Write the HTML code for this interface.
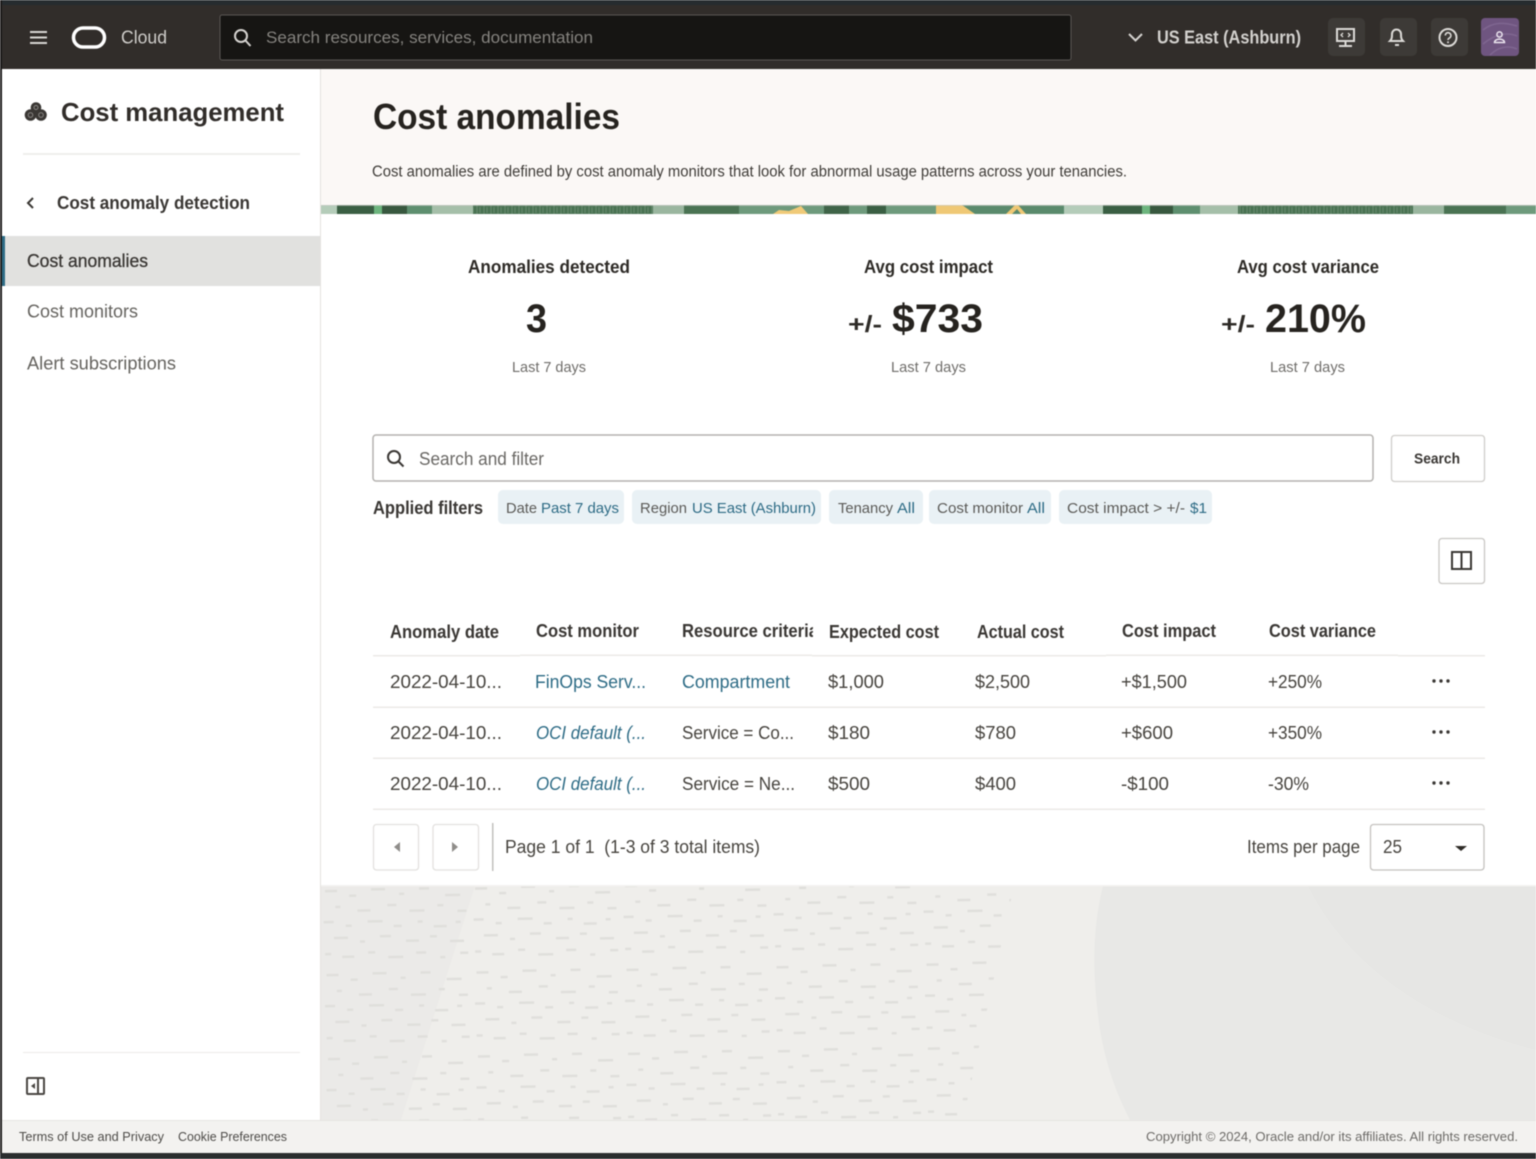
<!DOCTYPE html>
<html><head><meta charset="utf-8"><title>Cost anomalies</title>
<style>
html,body{margin:0;padding:0;background:#fff;width:1536px;height:1159px;overflow:hidden}
svg{display:block;filter:blur(.6px)}
text{font-family:"Liberation Sans",sans-serif;white-space:pre}
.b{font-weight:bold}
.d{fill:#312d2a}
.g{fill:#5f5d5a}
.l{fill:#2d6b85}
.t{font-size:18px;fill:#47443f}
.h{font-size:18px;font-weight:bold;fill:#3a3734}
.c{font-size:15px;fill:#5b5a57}
.cl{font-size:15px;fill:#2d6b85}
</style></head>
<body>
<svg width="1536" height="1159" viewBox="0 0 1536 1159" xmlns="http://www.w3.org/2000/svg">
<defs>
<pattern id="dash" width="150" height="84" patternUnits="userSpaceOnUse" patternTransform="translate(321 886) rotate(-1)">
<g fill="#e0dfdc">
<rect x="4" y="4" width="12" height="2.500"/><rect x="28" y="9" width="7" height="2.500"/><rect x="50" y="3" width="14" height="2.500"/><rect x="78" y="8" width="5" height="2.500"/><rect x="98" y="3" width="10" height="2.500"/><rect x="124" y="10" width="15" height="2.500"/>
<rect x="14" y="20" width="5" height="2.500"/><rect x="36" y="24" width="13" height="2.500"/><rect x="66" y="19" width="9" height="2.500"/><rect x="88" y="25" width="15" height="2.500"/><rect x="116" y="20" width="6" height="2.500"/><rect x="136" y="26" width="9" height="2.500"/>
<rect x="2" y="35" width="10" height="2.500"/><rect x="24" y="39" width="6" height="2.500"/><rect x="46" y="35" width="15" height="2.500"/><rect x="72" y="40" width="8" height="2.500"/><rect x="96" y="36" width="5" height="2.500"/><rect x="112" y="41" width="13" height="2.500"/><rect x="134" y="37" width="5" height="2.500"/>
<rect x="12" y="51" width="14" height="2.500"/><rect x="38" y="55" width="5" height="2.500"/><rect x="58" y="50" width="11" height="2.500"/><rect x="84" y="55" width="13" height="2.500"/><rect x="108" y="51" width="7" height="2.500"/><rect x="128" y="56" width="14" height="2.500"/>
<rect x="3" y="67" width="6" height="2.500"/><rect x="20" y="70" width="12" height="2.500"/><rect x="46" y="66" width="7" height="2.500"/><rect x="66" y="71" width="15" height="2.500"/><rect x="94" y="67" width="10" height="2.500"/><rect x="118" y="72" width="5" height="2.500"/><rect x="138" y="68" width="8" height="2.500"/>
</g>
</pattern>
<pattern id="grain" width="7" height="9" patternUnits="userSpaceOnUse">
<path d="M1 0v9M4 0v6" stroke="#ffffff" stroke-opacity=".16" stroke-width="1"/>
</pattern>
</defs>

<!-- frame -->
<rect width="1536" height="1159" fill="#fff"/>
<rect width="1536" height="5" fill="#262c2f"/>
<rect y="5" width="1536" height="64" fill="#312d2a"/>
<rect x="0" y="0" width="2" height="1159" fill="#1c1b1a"/>

<!-- header -->
<g stroke="#d8d6d3" stroke-width="2"><path d="M30 32h17M30 37.500h17M30 43h17"/></g>
<rect x="73.500" y="28" width="31" height="19" rx="9.500" fill="none" stroke="#fff" stroke-width="3.500"/>
<text x="121" y="43.500" font-size="18" fill="#cfcdca" textLength="46" lengthAdjust="spacingAndGlyphs">Cloud</text>
<rect x="220" y="15" width="851" height="45" rx="2" fill="#161513" stroke="#5a5754"/>
<circle cx="241" cy="36" r="6" fill="none" stroke="#d5d3d0" stroke-width="2"/><path d="M245.500 40.500l5 5.500" stroke="#d5d3d0" stroke-width="2"/>
<text x="266" y="43" font-size="17" fill="#85837f" textLength="327" lengthAdjust="spacingAndGlyphs">Search resources, services, documentation</text>
<path d="M1129 34l6.500 6.500 6.500-6.500" fill="none" stroke="#d5d3d0" stroke-width="2"/>
<text x="1157" y="43.500" font-size="18" fill="#d3d1ce" class="b" textLength="144" lengthAdjust="spacingAndGlyphs">US East (Ashburn)</text>
<rect x="1328" y="18" width="37" height="38" rx="5" fill="#3d3a37"/>
<rect x="1380" y="18" width="37" height="38" rx="5" fill="#3d3a37"/>
<rect x="1431" y="18" width="37" height="38" rx="5" fill="#3d3a37"/>
<g fill="none" stroke="#dcdad7" stroke-width="2">
<rect x="1337" y="29" width="17" height="12"/><path d="M1345.500 41v4M1339 46h13"/>
<path d="M1343 33l-2 2 2 2M1348 33l2 2-2 2" stroke-width="1.300"/>
<path d="M1390 41c2-2 2-4 2-7a4.500 4.500 0 0 1 9 0c0 3 0 5 2 7z"/><path d="M1395 45h4"/>
<circle cx="1448" cy="37.500" r="8.500"/>
<path d="M1445.300 35.500a2.800 2.800 0 1 1 4.200 2.400c-1 .6-1.500 1-1.500 2.100" stroke-width="1.600"/>
</g>
<circle cx="1448" cy="42.300" r="1" fill="#dcdad7"/>
<rect x="1481" y="18" width="38" height="38" rx="4" fill="#6f5580"/>
<g stroke="#7f6690" stroke-width="1.500" fill="none"><path d="M1483 30c10-8 20-8 34-4M1483 44c12-10 24-12 34-8M1490 55c8-8 18-10 27-6"/></g>
<circle cx="1499.500" cy="34.500" r="2.600" fill="none" stroke="#ece6ef" stroke-width="1.500"/><path d="M1494.500 42.500c0-4.500 10-4.500 10 0z" fill="none" stroke="#ece6ef" stroke-width="1.500"/>

<!-- sidebar -->
<rect x="320" y="69" width="1" height="1051" fill="#e4e2df"/>
<g fill="#3a3734"><circle cx="36" cy="107.500" r="5.300"/><circle cx="30.500" cy="115" r="5.800"/><circle cx="41" cy="115" r="5.800"/></g>
<g fill="none" stroke="#8f8d8a" stroke-width=".9"><circle cx="36" cy="107.500" r="2"/><circle cx="30.500" cy="115" r="2.300"/><circle cx="41" cy="115" r="2.300"/></g>
<text x="61" y="121" font-size="26" class="b d" textLength="223" lengthAdjust="spacingAndGlyphs">Cost management</text>
<rect x="23" y="153" width="277" height="2" fill="#efeeec"/>
<path d="M33 198l-5 5 5 5" fill="none" stroke="#3a3734" stroke-width="2"/>
<text x="57" y="209" font-size="18" class="b" fill="#3a3734" textLength="193" lengthAdjust="spacingAndGlyphs">Cost anomaly detection</text>
<rect x="2" y="236" width="318" height="50" fill="#e1e1df"/>
<rect x="2" y="236" width="3" height="50" fill="#2d6b85"/>
<text x="27" y="267" font-size="18" fill="#3a3734" stroke="#3a3734" stroke-width=".3" textLength="121" lengthAdjust="spacingAndGlyphs">Cost anomalies</text>
<text x="27" y="317.500" font-size="18" fill="#65635f" textLength="111" lengthAdjust="spacingAndGlyphs">Cost monitors</text>
<text x="27" y="369.500" font-size="18" fill="#65635f" textLength="149" lengthAdjust="spacingAndGlyphs">Alert subscriptions</text>
<rect x="23" y="1052" width="277" height="1" fill="#ecebe9"/>
<rect x="27" y="1078" width="17" height="16" rx="1" fill="none" stroke="#4a4743" stroke-width="2"/>
<path d="M38 1078v16" stroke="#4a4743" stroke-width="2"/><path d="M35 1083l-4 3 4 3z" fill="#4a4743"/>

<!-- hero -->
<rect x="321" y="69" width="1215" height="136" fill="#fbf8f6"/>
<text x="373" y="129" font-size="36" class="b" fill="#26231f" textLength="247" lengthAdjust="spacingAndGlyphs">Cost anomalies</text>
<text x="372" y="176.500" font-size="15.500" fill="#3f3c38" textLength="755" lengthAdjust="spacingAndGlyphs">Cost anomalies are defined by cost anomaly monitors that look for abnormal usage patterns across your tenancies.</text>

<!-- strip -->
<rect x="321" y="205" width="1215" height="9" fill="#5a8a6c"/>
<g>
<rect x="321" y="205" width="16" height="9" fill="#b4ccb9"/>
<rect x="337" y="205" width="37" height="9" fill="#3a5f43"/>
<rect x="374" y="205" width="8" height="9" fill="#6db57e"/>
<rect x="382" y="205" width="25" height="9" fill="#38583f"/>
<rect x="407" y="205" width="25" height="9" fill="#5e8f6f"/>
<rect x="432" y="205" width="41" height="9" fill="#a5bfa9"/>
<rect x="473" y="205" width="180" height="9" fill="#4a7353"/>
<rect x="653" y="205" width="31" height="9" fill="#9ab69f"/>
<rect x="684" y="205" width="55" height="9" fill="#4a7353"/>
<rect x="739" y="205" width="34" height="9" fill="#6e9a7c"/>
<rect x="773" y="205" width="51" height="9" fill="#6e9a7c"/>
<path d="M773 214l6-4 10 1 12-5 7 8z" fill="#f0ca78"/>
<rect x="824" y="205" width="25" height="9" fill="#3f6448"/>
<rect x="849" y="205" width="18" height="9" fill="#6e9a7c"/>
<rect x="867" y="205" width="19" height="9" fill="#3a5f43"/>
<rect x="886" y="205" width="50" height="9" fill="#6e9a7c"/>
<path d="M936 205h26l13 9h-39z" fill="#efc875"/>
<path d="M1006 214l9-9h3l8 9h-5l-4-5-5 5z" fill="#efc875"/>
<rect x="1064" y="205" width="39" height="9" fill="#b4ccb9"/>
<rect x="1103" y="205" width="39" height="9" fill="#3a5f43"/>
<rect x="1142" y="205" width="8" height="9" fill="#6db57e"/>
<rect x="1150" y="205" width="23" height="9" fill="#38583f"/>
<rect x="1173" y="205" width="27" height="9" fill="#5e8f6f"/>
<rect x="1200" y="205" width="38" height="9" fill="#a5bfa9"/>
<rect x="1238" y="205" width="175" height="9" fill="#4a7353"/>
<rect x="1413" y="205" width="31" height="9" fill="#9ab69f"/>
<rect x="1444" y="205" width="62" height="9" fill="#4a7353"/>
<rect x="1506" y="205" width="30" height="9" fill="#6e9a7c"/>
<rect x="473" y="205" width="180" height="9" fill="url(#grain)"/>
<rect x="1238" y="205" width="175" height="9" fill="url(#grain)"/>
<rect x="321" y="205" width="1215" height="1" fill="#c9c9c6" fill-opacity=".6"/>
</g>

<!-- metrics -->
<text x="468" y="273" font-size="18" class="b" fill="#2e2b27" textLength="162" lengthAdjust="spacingAndGlyphs">Anomalies detected</text>
<text x="526" y="332" font-size="40" class="b" fill="#26231f" textLength="21" lengthAdjust="spacingAndGlyphs">3</text>
<text x="512" y="372" font-size="15" fill="#6f6d6a" textLength="74" lengthAdjust="spacingAndGlyphs">Last 7 days</text>
<text x="864" y="273" font-size="18" class="b" fill="#2e2b27" textLength="129" lengthAdjust="spacingAndGlyphs">Avg cost impact</text>
<text x="848" y="332" font-size="23" class="b" fill="#2e2b27" textLength="34" lengthAdjust="spacingAndGlyphs">+/-</text>
<text x="892" y="332" font-size="40" class="b" fill="#26231f" textLength="91" lengthAdjust="spacingAndGlyphs">$733</text>
<text x="891" y="372" font-size="15" fill="#6f6d6a" textLength="75" lengthAdjust="spacingAndGlyphs">Last 7 days</text>
<text x="1237" y="273" font-size="18" class="b" fill="#2e2b27" textLength="142" lengthAdjust="spacingAndGlyphs">Avg cost variance</text>
<text x="1221" y="332" font-size="23" class="b" fill="#2e2b27" textLength="34" lengthAdjust="spacingAndGlyphs">+/-</text>
<text x="1265" y="332" font-size="40" class="b" fill="#26231f" textLength="101" lengthAdjust="spacingAndGlyphs">210%</text>
<text x="1270" y="372" font-size="15" fill="#6f6d6a" textLength="75" lengthAdjust="spacingAndGlyphs">Last 7 days</text>

<!-- search -->
<rect x="373" y="435" width="1000" height="46" rx="3" fill="#fff" stroke="#b4b2af" stroke-width="1.500"/>
<circle cx="394" cy="457" r="6" fill="none" stroke="#3a3734" stroke-width="2"/><path d="M398.500 461.500l5 5" stroke="#3a3734" stroke-width="2"/>
<text x="419" y="465" font-size="18" fill="#6a6865" textLength="125" lengthAdjust="spacingAndGlyphs">Search and filter</text>
<rect x="1391.500" y="435.500" width="93" height="46" rx="3" fill="#fff" stroke="#cfcdca" stroke-width="1.300"/>
<text x="1414" y="463.500" font-size="15" class="b" fill="#3a3734" textLength="46" lengthAdjust="spacingAndGlyphs">Search</text>

<!-- filters -->
<text x="373" y="514" font-size="18" class="b" fill="#3a3734" textLength="110" lengthAdjust="spacingAndGlyphs">Applied filters</text>
<g fill="#e9f1f5">
<rect x="498" y="490" width="126" height="34" rx="5"/>
<rect x="632" y="490" width="189" height="34" rx="5"/>
<rect x="829" y="490" width="94" height="34" rx="5"/>
<rect x="929" y="490" width="122" height="34" rx="5"/>
<rect x="1059" y="490" width="153" height="34" rx="5"/>
</g>
<text x="506" y="513" class="c" textLength="31" lengthAdjust="spacingAndGlyphs">Date</text>
<text x="541" y="513" class="cl" textLength="78" lengthAdjust="spacingAndGlyphs">Past 7 days</text>
<text x="640" y="513" class="c" textLength="47" lengthAdjust="spacingAndGlyphs">Region</text>
<text x="692" y="513" class="cl" textLength="124" lengthAdjust="spacingAndGlyphs">US East (Ashburn)</text>
<text x="838" y="513" class="c" textLength="55" lengthAdjust="spacingAndGlyphs">Tenancy</text>
<text x="897" y="513" class="cl" textLength="18" lengthAdjust="spacingAndGlyphs">All</text>
<text x="937" y="513" class="c" textLength="86" lengthAdjust="spacingAndGlyphs">Cost monitor</text>
<text x="1027" y="513" class="cl" textLength="18" lengthAdjust="spacingAndGlyphs">All</text>
<text x="1067" y="513" class="c" textLength="118" lengthAdjust="spacingAndGlyphs">Cost impact &gt; +/-</text>
<text x="1190" y="513" class="cl" textLength="17" lengthAdjust="spacingAndGlyphs">$1</text>

<!-- column toggle -->
<rect x="1439" y="538.500" width="45.500" height="45" rx="3" fill="#fff" stroke="#c9c7c4" stroke-width="1.300"/>
<rect x="1452" y="552" width="19" height="17" fill="none" stroke="#3a3734" stroke-width="2"/><path d="M1461.500 552v17" stroke="#3a3734" stroke-width="2"/>

<!-- table head -->
<text x="390" y="638" class="h" textLength="109" lengthAdjust="spacingAndGlyphs">Anomaly date</text>
<text x="536" y="637" class="h" textLength="103" lengthAdjust="spacingAndGlyphs">Cost monitor</text>
<text x="682" y="637" class="h" textLength="136" lengthAdjust="spacingAndGlyphs">Resource criteria</text>
<rect x="813" y="618" width="12" height="30" fill="#fff"/>
<text x="829" y="638" class="h" textLength="110" lengthAdjust="spacingAndGlyphs">Expected cost</text>
<text x="977" y="638" class="h" textLength="87" lengthAdjust="spacingAndGlyphs">Actual cost</text>
<text x="1122" y="637" class="h" textLength="94" lengthAdjust="spacingAndGlyphs">Cost impact</text>
<text x="1269" y="637" class="h" textLength="107" lengthAdjust="spacingAndGlyphs">Cost variance</text>
<g fill="#eceae7">
<rect x="373" y="655" width="147" height="1.500"/><rect x="520" y="654.500" width="292" height="1.500"/><rect x="812" y="655" width="294" height="1.500"/><rect x="1106" y="654.500" width="292" height="1.500"/><rect x="1398" y="655" width="87" height="1.500"/>
<rect x="373" y="706.500" width="1112" height="1.500"/><rect x="373" y="757.500" width="1112" height="1.500"/><rect x="373" y="808.500" width="1112" height="1.500"/>
</g>

<!-- rows -->
<text x="390" y="688" class="t" textLength="112" lengthAdjust="spacingAndGlyphs">2022-04-10...</text>
<text x="535" y="688" font-size="18" class="l" textLength="111" lengthAdjust="spacingAndGlyphs">FinOps Serv...</text>
<text x="682" y="688" font-size="18" class="l" textLength="108" lengthAdjust="spacingAndGlyphs">Compartment</text>
<text x="828" y="688" class="t" textLength="56" lengthAdjust="spacingAndGlyphs">$1,000</text>
<text x="975" y="688" class="t" textLength="55" lengthAdjust="spacingAndGlyphs">$2,500</text>
<text x="1121" y="688" class="t" textLength="66" lengthAdjust="spacingAndGlyphs">+$1,500</text>
<text x="1268" y="688" class="t" textLength="54" lengthAdjust="spacingAndGlyphs">+250%</text>

<text x="390" y="739" class="t" textLength="112" lengthAdjust="spacingAndGlyphs">2022-04-10...</text>
<text x="536" y="739" font-size="18" font-style="italic" class="l" textLength="110" lengthAdjust="spacingAndGlyphs">OCI default (...</text>
<text x="682" y="739" class="t" textLength="112" lengthAdjust="spacingAndGlyphs">Service = Co...</text>
<text x="828" y="739" class="t" textLength="42" lengthAdjust="spacingAndGlyphs">$180</text>
<text x="975" y="739" class="t" textLength="41" lengthAdjust="spacingAndGlyphs">$780</text>
<text x="1121" y="739" class="t" textLength="52" lengthAdjust="spacingAndGlyphs">+$600</text>
<text x="1268" y="739" class="t" textLength="54" lengthAdjust="spacingAndGlyphs">+350%</text>

<text x="390" y="790" class="t" textLength="112" lengthAdjust="spacingAndGlyphs">2022-04-10...</text>
<text x="536" y="790" font-size="18" font-style="italic" class="l" textLength="110" lengthAdjust="spacingAndGlyphs">OCI default (...</text>
<text x="682" y="790" class="t" textLength="113" lengthAdjust="spacingAndGlyphs">Service = Ne...</text>
<text x="828" y="790" class="t" textLength="42" lengthAdjust="spacingAndGlyphs">$500</text>
<text x="975" y="790" class="t" textLength="41" lengthAdjust="spacingAndGlyphs">$400</text>
<text x="1121" y="790" class="t" textLength="48" lengthAdjust="spacingAndGlyphs">-$100</text>
<text x="1268" y="790" class="t" textLength="41" lengthAdjust="spacingAndGlyphs">-30%</text>

<g fill="#3a3734">
<circle cx="1434" cy="681" r="1.700"/><circle cx="1441" cy="681" r="1.700"/><circle cx="1448" cy="681" r="1.700"/>
<circle cx="1434" cy="732" r="1.700"/><circle cx="1441" cy="732" r="1.700"/><circle cx="1448" cy="732" r="1.700"/>
<circle cx="1434" cy="783" r="1.700"/><circle cx="1441" cy="783" r="1.700"/><circle cx="1448" cy="783" r="1.700"/>
</g>

<!-- pagination -->
<rect x="373.500" y="824.500" width="45" height="45.500" rx="3" fill="#fff" stroke="#e3e1df" stroke-width="1.300"/>
<rect x="433" y="824.500" width="45.500" height="45.500" rx="3" fill="#fff" stroke="#e3e1df" stroke-width="1.300"/>
<path d="M400 842v10l-6-5z" fill="#8f8d8a"/><path d="M452 842v10l6-5z" fill="#8f8d8a"/>
<rect x="492" y="823" width="1.500" height="48" fill="#c2c0bd"/>
<text x="505" y="853" class="t" textLength="255" lengthAdjust="spacingAndGlyphs">Page 1 of 1  (1-3 of 3 total items)</text>
<text x="1247" y="853" class="t" textLength="113" lengthAdjust="spacingAndGlyphs">Items per page</text>
<rect x="1370.500" y="824.500" width="113.500" height="45.500" rx="3" fill="#fff" stroke="#c4c2bf" stroke-width="1.300"/>
<text x="1383" y="853" class="t" textLength="19" lengthAdjust="spacingAndGlyphs">25</text>
<path d="M1455 846h12l-6 5z" fill="#2e2b27"/>

<!-- texture -->
<rect x="321" y="886" width="1215" height="234" fill="#efeeeb"/>
<path d="M321 886H475L401 1120H321z" fill="#ebeae8"/>
<path d="M321 886H1014L963 1120H321z" fill="url(#dash)"/>
<path d="M1103 886C1092 930 1092 975 1100 1030C1108 1075 1120 1100 1130 1120H1536V886z" fill="#e8e8e6"/>
<path d="M1308 886C1345 960 1420 1020 1536 1050V886z" fill="#e6e6e4"/>
<rect x="321" y="885" width="1215" height="1.500" fill="#f3f2f0"/>

<!-- footer -->
<rect x="2" y="1120" width="1534" height="33" fill="#f3f2f0"/>
<rect x="2" y="1120" width="1534" height="1" fill="#e6e5e2"/>
<text x="19" y="1141" font-size="13" fill="#4e4c49" textLength="145" lengthAdjust="spacingAndGlyphs">Terms of Use and Privacy</text>
<text x="178" y="1141" font-size="13" fill="#4e4c49" textLength="109" lengthAdjust="spacingAndGlyphs">Cookie Preferences</text>
<text x="1146" y="1141" font-size="13" fill="#6d6b68" textLength="372" lengthAdjust="spacingAndGlyphs">Copyright © 2024, Oracle and/or its affiliates. All rights reserved.</text>
<rect y="1153" width="1536" height="6" fill="#2a2d2e"/>
</svg>
</body></html>
